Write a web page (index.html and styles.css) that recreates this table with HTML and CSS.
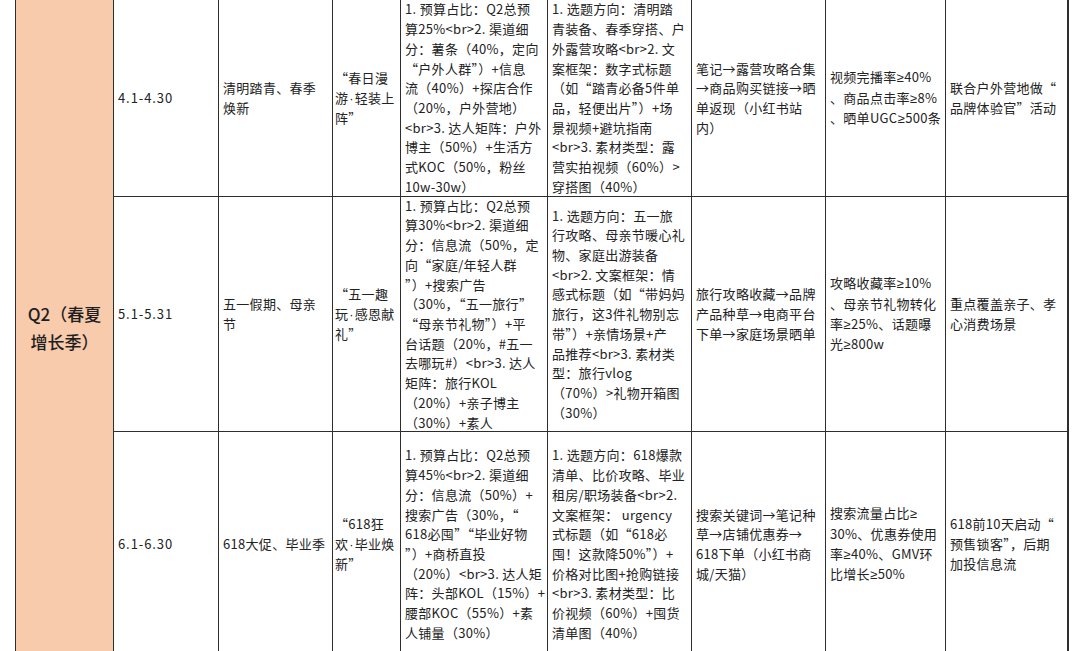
FILE: index.html
```html
<!DOCTYPE html>
<html lang="zh-CN">
<head>
<meta charset="utf-8">
<title>Q2 营销规划</title>
<link rel="stylesheet" href="styles.css">
</head>
<body>
<div class="sheet">
  <div class="cell quarter"><div class="q">Q2（春夏<br>增长季）</div></div>

  <div class="cell"><div class="txt date">4.1-4.30</div></div>
  <div class="cell"><div class="txt">清明踏青、春季<br>焕新</div></div>
  <div class="cell narrow"><div class="txt">“春日漫<br>游<span class="s dot">·</span>轻装上<br>阵”</div></div>
  <div class="cell"><div class="txt">1. 预算占比：Q2总预<br>算25%&lt;br&gt;2. 渠道细<br>分：薯条（40%，定向<br>“户外人群”）+信息<br>流（40%）+探店合作<br>（20%，户外营地）<br>&lt;br&gt;3. 达人矩阵：户外<br>博主（50%）+生活方<br>式KOC（50%，粉丝<br>10w-30w）</div></div>
  <div class="cell"><div class="txt">1. 选题方向：清明踏<br>青装备、春季穿搭、户<br>外露营攻略&lt;br&gt;2. 文<br>案框架：数字式标题<br>（如“踏青必备5件单<br>品，轻便出片”）+场<br>景视频+避坑指南<br>&lt;br&gt;3. 素材类型：露<br>营实拍视频（60%）&gt;<br>穿搭图（40%）</div></div>
  <div class="cell"><div class="txt">笔记→露营攻略合集<br>→商品购买链接→晒<br>单返现（小红书站<br>内）</div></div>
  <div class="cell"><div class="txt">视频完播率<span class="s">≥</span>40%<br>、商品点击率<span class="s">≥</span>8%<br>、晒单UGC<span class="s">≥</span>500条</div></div>
  <div class="cell"><div class="txt">联合户外营地做“<br>品牌体验官”活动</div></div>

  <div class="cell"><div class="txt date">5.1-5.31</div></div>
  <div class="cell"><div class="txt">五一假期、母亲<br>节</div></div>
  <div class="cell narrow"><div class="txt">“五一趣<br>玩<span class="s dot">·</span>感恩献<br>礼”</div></div>
  <div class="cell"><div class="txt">1. 预算占比：Q2总预<br>算30%&lt;br&gt;2. 渠道细<br>分：信息流（50%，定<br>向“家庭/年轻人群<br>”）+搜索广告<br>（30%，“五一旅行”<br>“母亲节礼物”）+平<br>台话题（20%，#五一<br>去哪玩#）&lt;br&gt;3. 达人<br>矩阵：旅行KOL<br>（20%）+亲子博主<br>（30%）+素人</div></div>
  <div class="cell"><div class="txt">1. 选题方向：五一旅<br>行攻略、母亲节暖心礼<br>物、家庭出游装备<br>&lt;br&gt;2. 文案框架：情<br>感式标题（如“带妈妈<br>旅行，这3件礼物别忘<br>带”）+亲情场景+产<br>品推荐&lt;br&gt;3. 素材类<br>型：旅行vlog<br>（70%）&gt;礼物开箱图<br>（30%）</div></div>
  <div class="cell"><div class="txt">旅行攻略收藏→品牌<br>产品种草→电商平台<br>下单→家庭场景晒单</div></div>
  <div class="cell"><div class="txt">攻略收藏率<span class="s">≥</span>10%<br>、母亲节礼物转化<br>率<span class="s">≥</span>25%、话题曝<br>光<span class="s">≥</span>800w</div></div>
  <div class="cell"><div class="txt">重点覆盖亲子、孝<br>心消费场景</div></div>

  <div class="cell"><div class="txt date">6.1-6.30</div></div>
  <div class="cell"><div class="txt">618大促、毕业季</div></div>
  <div class="cell narrow"><div class="txt">“618狂<br>欢<span class="s dot">·</span>毕业焕<br>新”</div></div>
  <div class="cell"><div class="txt">1. 预算占比：Q2总预<br>算45%&lt;br&gt;2. 渠道细<br>分：信息流（50%）+<br>搜索广告（30%，“<br>618必囤”“毕业好物<br>”）+商桥直投<br>（20%）&lt;br&gt;3. 达人矩<br>阵：头部KOL（15%）+<br>腰部KOC（55%）+素<br>人铺量（30%）</div></div>
  <div class="cell"><div class="txt">1. 选题方向：618爆款<br>清单、比价攻略、毕业<br>租房/职场装备&lt;br&gt;2.<br>文案框架： urgency<br>式标题（如“618必<br>囤！这款降50%”）+<br>价格对比图+抢购链接<br>&lt;br&gt;3. 素材类型：比<br>价视频（60%）+囤货<br>清单图（40%）</div></div>
  <div class="cell"><div class="txt">搜索关键词→笔记种<br>草→店铺优惠券→<br>618下单（小红书商<br>城/天猫）</div></div>
  <div class="cell"><div class="txt">搜索流量占比<span class="s">≥</span><br>30%、优惠券使用<br>率<span class="s">≥</span>40%、GMV环<br>比增长<span class="s">≥</span>50%</div></div>
  <div class="cell"><div class="txt">618前10天启动“<br>预售锁客”，后期<br>加投信息流</div></div>
</div>
</body>
</html>
```

FILE: styles.css
```css
html, body {
  margin: 0;
  padding: 0;
  background: #ffffff;
  overflow: hidden;
}

body {
  font-family: "Noto Sans CJK SC", "Noto Sans", sans-serif;
  color: #222222;
}

.sheet {
  display: grid;
  grid-template-columns: 97px 104px 113px 67px 146px 143px 133px 119px 121px;
  grid-template-rows: 196px 234px 224px;
  gap: 1px;
  background: #2e2e2e;
  width: max-content;
  margin-left: 15px;
  margin-top: -1px;
  padding: 1px 2px 1px 1px;
}

.cell {
  background: #ffffff;
  display: flex;
  align-items: center;
  overflow: hidden;
  padding: 0 2px 0 4px;
  min-width: 0;
}

.cell.narrow {
  padding-left: 2px;
}

.txt {
  font-size: 13px;
  line-height: 19.7px;
  letter-spacing: 0.3px;
  white-space: nowrap;
}

.txt.date {
  letter-spacing: 0.9px;
}

.s {
  font-family: "Liberation Sans", sans-serif;
  letter-spacing: 0.6px;
}

.s.dot {
  letter-spacing: 0;
  padding: 0 1px;
}

.quarter {
  grid-row: 1 / span 3;
  background: #f8cbad;
  justify-content: center;
  padding: 0;
}

.q {
  font-size: 17px;
  line-height: 28px;
  font-weight: 500;
  text-align: center;
  color: #1e1e1e;
  white-space: nowrap;
}
```
